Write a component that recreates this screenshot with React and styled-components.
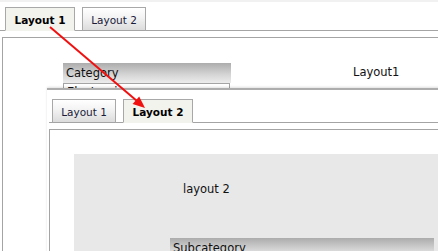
import React from 'react'
import styled, { createGlobalStyle } from 'styled-components'

const GlobalStyle = createGlobalStyle`
    html, body {
        margin: 0;
        padding: 0;
        background: #fff;
    }
    body {
        font-family: "DejaVu Sans", Verdana, sans-serif;
        color: #111;
    }
`

function TabStrip({ tabs, active, ...rest }) {
    return (
        <TabBar {...rest}>
            {tabs.map((t, i) => (
                <Tab key={t} $active={i === active} $width={i === active ? 70 : 64}>
                    {t}
                </Tab>
            ))}
        </TabBar>
    )
}

export default function App() {
    return (
        <Page>
            <GlobalStyle />
            <TopStrip />
            <TabStrip tabs={['Layout 1', 'Layout 2']} active={0} $left={5} $top={5} />
            <Panel $left={2} $top={6}>
                <FirstBody>
                    <Widget $width={168}>
                        <WidgetHeader>Category</WidgetHeader>
                        <WidgetList>Electronics</WidgetList>
                    </Widget>
                    <Caption>Layout1</Caption>
                </FirstBody>
            </Panel>

            <Shot>
                <TabStrip tabs={['Layout 1', 'Layout 2']} active={1} $left={3} $top={9} $offset={2} />
                <Panel $left={2} $top={6}>
                    <GreyBox>
                        <SecondCaption>layout 2</SecondCaption>
                        <Widget $width={264} $indent={96}>
                            <WidgetHeader>Subcategory</WidgetHeader>
                        </Widget>
                    </GreyBox>
                </Panel>
            </Shot>

            <Arrow width="438" height="251" viewBox="0 0 438 251">
                <line x1="50" y1="27" x2="137" y2="101" stroke="#f01010" strokeWidth="2" />
                <polygon points="145,108 132.6,104 139.2,96.4" fill="#f01010" />
            </Arrow>
        </Page>
    )
}

const Page = styled.div`
    position: relative;
    width: 438px;
    height: 251px;
    overflow: hidden;
    background: #fff;
`

const TopStrip = styled.div`
    height: 2px;
    background: #f1f1f1;
`

const TabBar = styled.div`
    display: flex;
    align-items: flex-end;
    gap: 7px;
    padding: ${p => p.$top}px 0 0 ${p => p.$left}px;
    margin-left: ${p => p.$offset || 0}px;
    border-bottom: 1px solid #a4a4a4;
    height: 23px;
`

const Tab = styled.div`
    box-sizing: border-box;
    width: ${p => p.$width}px;
    height: 24px;
    margin-bottom: -1px;
    border: 1px solid #a8a8a8;
    border-bottom: ${p => (p.$active ? '1px solid #f3f3ee' : '1px solid #a4a4a4')};
    background: ${p => (p.$active ? '#f3f3ee' : 'linear-gradient(#ffffff, #f4f4f4 40%, #dcdcdc)')};
    font-size: 10.5px;
    font-weight: ${p => (p.$active ? 'bold' : 'normal')};
    color: ${p => (p.$active ? '#000' : '#1a1a3a')};
    display: flex;
    align-items: center;
    justify-content: center;
    padding-top: 1px;
`

const Panel = styled.div`
    margin: ${p => p.$top}px 0 0 ${p => p.$left}px;
    width: 520px;
    height: 400px;
    border: 1px solid #a4a4a4;
`

const FirstBody = styled.div`
    display: grid;
    grid-template-columns: 290px auto;
    padding: 25px 0 0 60px;
`

const Widget = styled.div`
    width: ${p => p.$width}px;
    margin-left: ${p => p.$indent || 0}px;
`

const WidgetHeader = styled.div`
    height: 20px;
    box-sizing: border-box;
    padding: 2px 3px 0;
    background: linear-gradient(#acacac, #d6d6d6 60%, #ececec);
    font-size: 11.5px;
    line-height: 16px;
    color: #111;
`

const WidgetList = styled.div`
    height: 30px;
    border: 1px solid #a4a4a4;
    border-bottom: none;
    margin-right: 1px;
    padding: 1px 3px;
    font-size: 11.5px;
    line-height: 14px;
`

const Caption = styled.div`
    font-size: 11.5px;
    line-height: 16px;
    padding-top: 1px;
`

const Shot = styled.div`
    position: absolute;
    left: 47px;
    top: 88px;
    right: -40px;
    bottom: -40px;
    background: #fff;
    border-top: 2px solid #adadad;
    box-shadow: 0 -1px 2px rgba(0, 0, 0, 0.12);
`

const GreyBox = styled.div`
    margin: 24px 0 0 24px;
    height: 200px;
    background: #e8e8e8;
    padding-top: 27px;
`

const SecondCaption = styled.div`
    padding-left: 109px;
    font-size: 11.5px;
    line-height: 16px;
    margin-bottom: 41px;
`

const Arrow = styled.svg`
    position: absolute;
    left: 0;
    top: 0;
    pointer-events: none;
`
